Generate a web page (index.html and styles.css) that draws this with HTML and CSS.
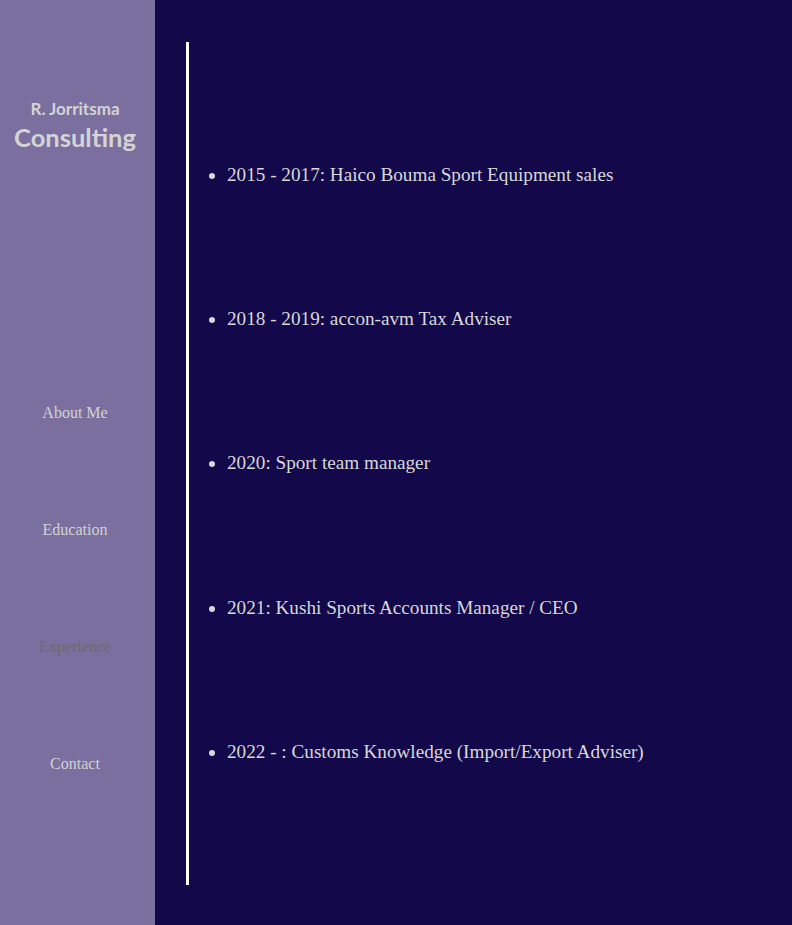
FILE: index.html
```html
<!DOCTYPE html>
<html lang="en">
<head>
<meta charset="utf-8">
<title>R. Jorritsma Consulting - Experience</title>
<link rel="stylesheet" href="styles.css">
</head>
<body>
<div class="page">
  <aside class="sidebar">
    <div class="brand">
      <div class="brand-small">R. Jorritsma</div>
      <div class="brand-big">Consulting</div>
    </div>
    <nav class="nav">
      <a class="nav-link" href="#">About Me</a>
      <a class="nav-link" href="#">Education</a>
      <a class="nav-link active" href="#">Experience</a>
      <a class="nav-link" href="#">Contact</a>
    </nav>
  </aside>
  <main class="main">
    <div class="timeline">
      <ul class="list">
        <li>2015 - 2017: Haico Bouma Sport Equipment sales</li>
        <li>2018 - 2019: accon-avm Tax Adviser</li>
        <li>2020: Sport team manager</li>
        <li>2021: Kushi Sports Accounts Manager / CEO</li>
        <li>2022 - : Customs Knowledge (Import/Export Adviser)</li>
      </ul>
    </div>
  </main>
</div>
</body>
</html>
```

FILE: styles.css
```css
html, body {
  margin: 0;
  padding: 0;
  height: 100%;
}
body {
  font-family: "Liberation Serif", "Times New Roman", serif;
  background: #13084a;
}
.page {
  display: flex;
  height: 925px;
}
.sidebar {
  width: 150px;
  padding-right: 5px;
  flex: none;
  background: #7a6f9f;
  display: flex;
  flex-direction: column;
  align-items: center;
}
.brand {
  margin-top: 98px;
  text-align: center;
  font-family: "Lato", "Liberation Sans", sans-serif;
  font-weight: 700;
  color: #d4d4d4;
}
.brand-small {
  font-size: 17px;
  line-height: 22px;
}
.brand-big {
  font-size: 25.5px;
  line-height: 34px;
}
.nav {
  margin-top: 250px;
  display: flex;
  flex-direction: column;
  align-items: center;
  gap: 99px;
}
.nav-link {
  font-size: 16px;
  line-height: 18px;
  color: #d3d3d3;
  text-decoration: none;
}
.nav-link.active {
  color: #6b6b6b;
}
.main {
  flex: 1;
  padding-top: 42px;
}
.timeline {
  margin-left: 31px;
  height: 843px;
  border-left: 3px solid #ffffff;
  display: flex;
}
.list {
  margin: 0;
  padding-left: 38px;
  display: flex;
  flex-direction: column;
  justify-content: space-evenly;
  color: #d8d8d8;
  font-size: 19.2px;
  line-height: 22px;
}
```
